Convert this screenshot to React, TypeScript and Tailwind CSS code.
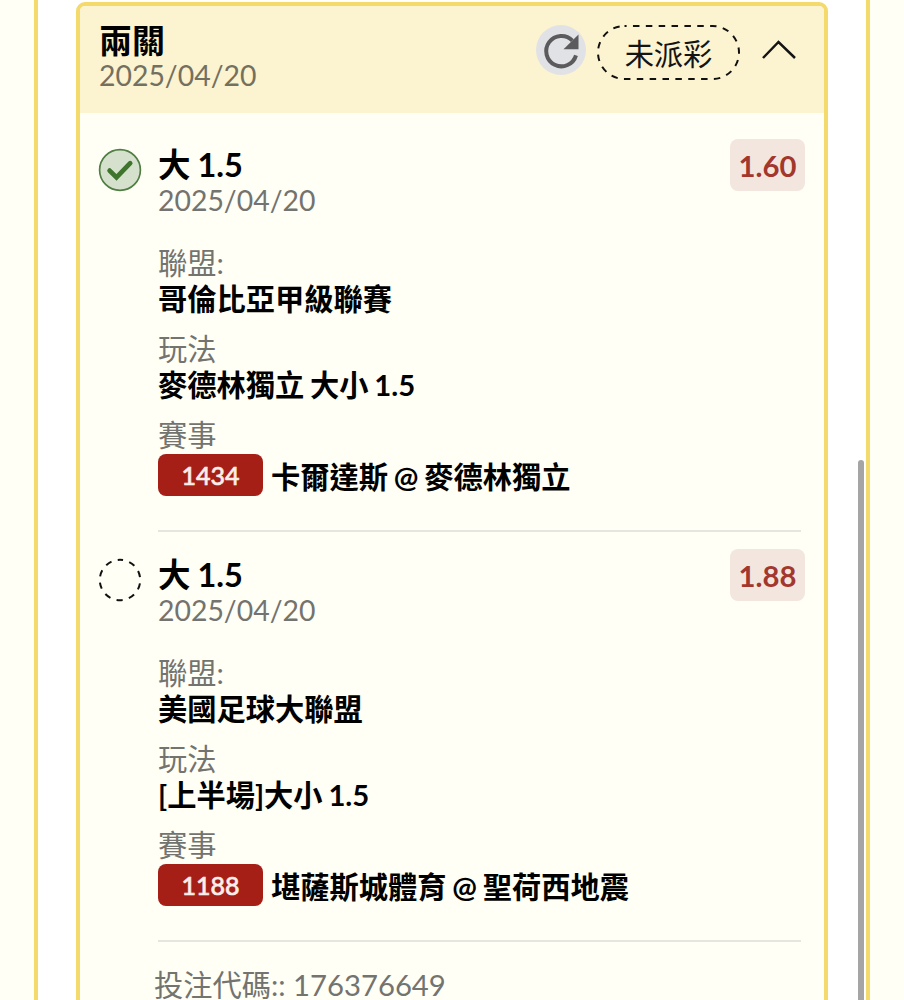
import clsx from "clsx"

type Leg = {
    settled: boolean
    pick: string
    date: string
    odds: string
    league: string
    market: string
    code: string
    match: string
}

const legs: Leg[] = [
    {
        settled: true,
        pick: "大 1.5",
        date: "2025/04/20",
        odds: "1.60",
        league: "哥倫比亞甲級聯賽",
        market: "麥德林獨立 大小 1.5",
        code: "1434",
        match: "卡爾達斯 @ 麥德林獨立",
    },
    {
        settled: false,
        pick: "大 1.5",
        date: "2025/04/20",
        odds: "1.88",
        league: "美國足球大聯盟",
        market: "[上半場]大小 1.5",
        code: "1188",
        match: "堪薩斯城體育 @ 聖荷西地震",
    },
]

function StatusIcon({ settled }: { settled: boolean }) {
    if (settled) {
        return (
            <svg width="44" height="44" viewBox="0 0 44 44" fill="none" className="block">
                <circle cx="22" cy="22" r="20.4" fill="#d5e1cd" stroke="#4f7d42" strokeWidth="1.7" />
                <path d="M11.6 22.6l6.9 6.9L32.2 15.2" stroke="#3f742c" strokeWidth="4.7" strokeLinecap="round" />
            </svg>
        )
    }
    return (
        <svg width="44" height="44" viewBox="0 0 44 44" fill="none" className="block">
            <circle
                cx="22"
                cy="22"
                r="20.2"
                stroke="#111"
                strokeWidth="2"
                strokeDasharray="6.3 6.39"
                strokeDashoffset="3.15"
                transform="rotate(-90 22 22)"
            />
        </svg>
    )
}

function Field({ label, value }: { label: string; value: string }) {
    return (
        <div className="mb-[14px]">
            <p className="h-9 leading-9 text-[#73736f]">{label}</p>
            <p className="h-9 font-bold leading-9 text-black [word-spacing:-1.3px]">{value}</p>
        </div>
    )
}

function LegRow({ leg }: { leg: Leg }) {
    return (
        <div className="flex h-[410px] pl-[18px] pr-[19px]">
            <div className="w-[60px] shrink-0 pt-[26px]">
                <StatusIcon settled={leg.settled} />
            </div>
            <div className="relative mr-[4px] flex-1 border-b-2 border-[#e6e6e0] pt-[26px]">
                <h3 className="mb-px h-[34px] text-[32.5px] font-bold leading-[34px] text-black [word-spacing:-1px]">
                    {leg.pick}
                </h3>
                <p className="mb-[28px] h-[34px] text-[28.4px] leading-[34px] text-[#73736f]">{leg.date}</p>
                <Field label="聯盟:" value={leg.league} />
                <Field label="玩法" value={leg.market} />
                <p className="h-9 leading-9 text-[#73736f]">賽事</p>
                <div className="mt-px flex h-[42px] items-center">
                    <span className="mr-[8px] h-[42px] w-[105px] rounded-[8px] bg-[#a51f17] text-center text-[25px] font-medium leading-[43px] text-[#fbeeea] [-webkit-text-stroke:0.6px_#fbeeea]">
                        {leg.code}
                    </span>
                    <span className="pt-[3px] font-bold text-black [word-spacing:-1.3px]">{leg.match}</span>
                </div>
                <span className="absolute -right-1 top-[17px] h-[52px] w-[75px] rounded-[8px] bg-[#f3e6df] text-center font-bold leading-[54px] text-[#a2372d]">
                    {leg.odds}
                </span>
            </div>
        </div>
    )
}

function CardHeader() {
    return (
        <div className="flex h-[107px] justify-between bg-[#fcf3d0] pl-[19px] pr-[27px]">
            <div className="pt-[17px]">
                <h2 className="mb-px h-[34px] text-[33px] font-bold leading-[34px] text-black">兩關</h2>
                <p className="h-[34px] text-[28.4px] leading-[34px] text-[#73705f]">2025/04/20</p>
            </div>
            <div className="flex pt-[19px]">
                <svg width="50" height="50" viewBox="0 0 50 50" fill="none" className="mr-[11px] block">
                    <circle cx="25" cy="25" r="25" fill="#e1e2e5" />
                    <path d="M40 30.4A15.2 15.2 0 1 1 36.4 15.6" stroke="#5b5b5d" strokeWidth="4" />
                    <path d="M42.5 9.5v14.8H27.5z" fill="#5b5b5d" />
                </svg>
                <div className="relative h-[55px] w-[143px]">
                    <svg width="143" height="55" viewBox="0 0 143 55" fill="none" className="absolute inset-0">
                        <rect
                            x="1"
                            y="1"
                            width="141"
                            height="53"
                            rx="26.5"
                            stroke="#111"
                            strokeWidth="2"
                            strokeDasharray="6.5 6.36"
                            strokeDashoffset="4.4"
                        />
                    </svg>
                    <p className="text-center leading-[58px] text-[#141414]">未派彩</p>
                </div>
                <svg width="36" height="22" viewBox="0 0 36 22" fill="none" className="ml-[21px] mt-[14px] block">
                    <path d="M2 19L17.5 3L34 19" stroke="#141414" strokeWidth="2.5" />
                </svg>
            </div>
        </div>
    )
}

export default function App() {
    return (
        <div
            className={clsx(
                "h-[1000px] overflow-hidden bg-[#fffff6] pl-[34px] pr-[34px] text-[29.25px]",
                "font-[Lato,'Noto_Sans_CJK_TC',sans-serif]"
            )}
        >
            <div className="relative h-full border-x-4 border-[#f4da6c] bg-white pl-[38px] pr-[38px] pt-[2px]">
                <div className="h-[1040px] overflow-hidden rounded-[9px] border-4 border-[#f4da6c] bg-[#fffff6]">
                    <CardHeader />
                    <div className="pt-[9px]">
                        {legs.map((leg) => (
                            <LegRow key={leg.code} leg={leg} />
                        ))}
                    </div>
                    <p className="pl-[74px] pt-[25px] leading-9 text-[#73736f]">投注代碼:: 176376649</p>
                </div>
                <div className="absolute right-[2px] top-[460px] h-[600px] w-[6px] rounded-full bg-[#a5a5a5]" />
            </div>
        </div>
    )
}
